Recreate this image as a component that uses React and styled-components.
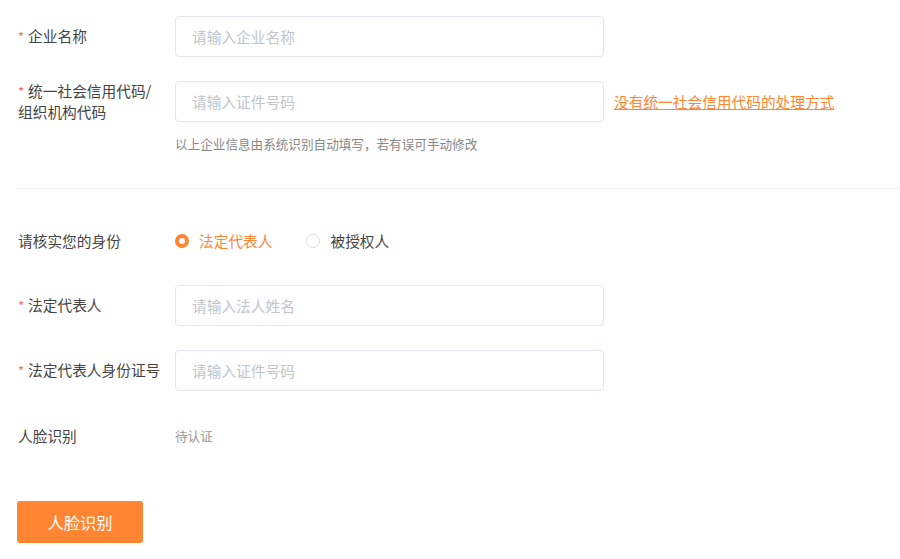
import styled, { createGlobalStyle } from "styled-components";

const GlobalStyle = createGlobalStyle`
    body {
        margin: 0;
        background: #fff;
        font-family: "Noto Sans CJK SC", "Noto Sans", sans-serif;
    }
`;

export default function App() {
    return (
        <>
            <GlobalStyle />
            <Page>
                <Row>
                    <Label required>企业名称</Label>
                    <Input placeholder="请输入企业名称" />
                </Row>
                <Row>
                    <Label required>统一社会信用代码/<br />组织机构代码</Label>
                    <Input placeholder="请输入证件号码" />
                    <Link href="#">没有统一社会信用代码的处理方式</Link>
                </Row>
                <Hint>以上企业信息由系统识别自动填写，若有误可手动修改</Hint>
                <Divider />
                <Row>
                    <Label>请核实您的身份</Label>
                    <RadioGroup>
                        <RadioItem checked>
                            <RadioDot checked />
                            法定代表人
                        </RadioItem>
                        <RadioItem>
                            <RadioDot />
                            被授权人
                        </RadioItem>
                    </RadioGroup>
                </Row>
                <Row>
                    <Label required>法定代表人</Label>
                    <Input placeholder="请输入法人姓名" />
                </Row>
                <Row gap={25}>
                    <Label required>法定代表人身份证号</Label>
                    <Input placeholder="请输入证件号码" />
                </Row>
                <Row>
                    <Label>人脸识别</Label>
                    <Status>待认证</Status>
                </Row>
                <Button>人脸识别</Button>
            </Page>
        </>
    );
}

const Page = styled.div`
    padding: 16px 0 0 18px;
`;

const Row = styled.div`
    display: flex;
    align-items: center;
    height: 41px;
    margin-top: ${props => props.gap ? props.gap - 24 : 0}px;
    margin-bottom: 24px;
`;

const Label = styled.div`
    width: 157px;
    flex-shrink: 0;
    font-size: 14.7px;
    line-height: 20px;
    color: #444;
    &::before {
        content: ${props => props.required ? '"*"' : "none"};
        color: #f56c6c;
        font-size: 13px;
        margin-right: 4px;
    }
`;

const Input = styled.input`
    box-sizing: border-box;
    width: 429px;
    height: 41px;
    border: 1px solid #e4e7ed;
    border-radius: 4px;
    padding: 0 16px;
    font-family: inherit;
    font-size: 14.7px;
    color: #333;
    outline: none;
    &::placeholder {
        color: #c0c4cc;
    }
`;

const Link = styled.a`
    margin-left: 10px;
    font-size: 14.7px;
    color: #ff8533;
    text-decoration: underline;
`;

const Hint = styled.div`
    margin: -12px 0 0 157px;
    font-size: 12.6px;
    line-height: 20px;
    color: #888;
`;

const Divider = styled.div`
    height: 1px;
    background: #f0f0f0;
    margin: 34px 0 31px 0;
`;

const RadioGroup = styled.div`
    display: flex;
    align-items: center;
    gap: 34px;
`;

const RadioItem = styled.label`
    display: flex;
    align-items: center;
    gap: 10px;
    font-size: 14.7px;
    color: ${props => props.checked ? "#ff8533" : "#444"};
`;

const RadioDot = styled.span`
    box-sizing: border-box;
    width: 14px;
    height: 14px;
    border-radius: 50%;
    border: ${props => props.checked ? "4px solid #ff8533" : "1px solid #dcdfe6"};
    background: #fff;
`;

const Status = styled.div`
    font-size: 12.6px;
    color: #999;
`;

const Button = styled.button`
    margin: 21px 0 0 -1px;
    width: 126px;
    height: 42px;
    border: none;
    border-radius: 3px;
    background: #ff8533;
    color: #fff;
    font-family: inherit;
    font-size: 16.3px;
`;
